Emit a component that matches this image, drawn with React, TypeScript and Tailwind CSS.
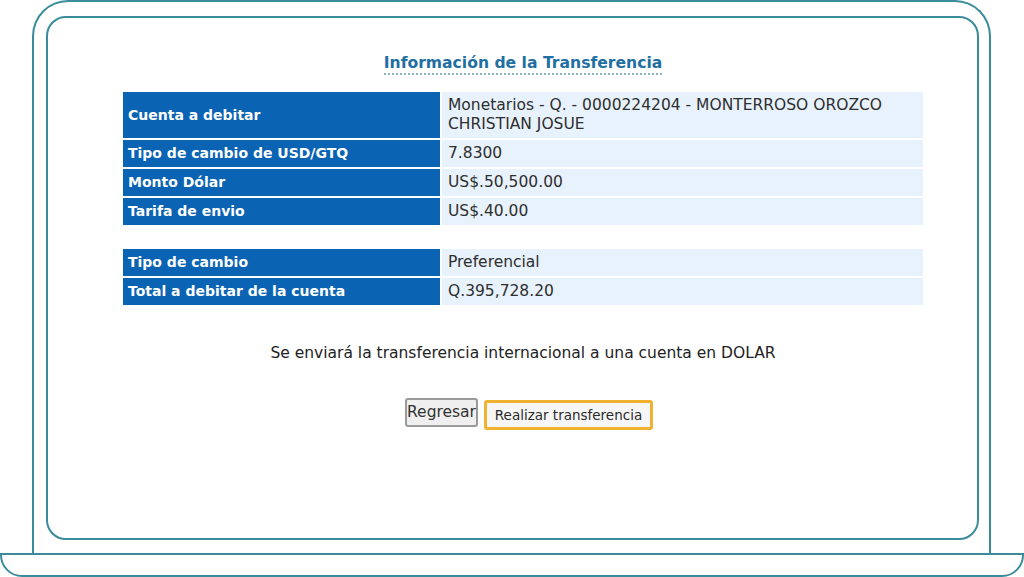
const rowsA = [
  { label: "Cuenta a debitar", value: "Monetarios - Q. - 0000224204 - MONTERROSO OROZCO CHRISTIAN JOSUE", tall: true },
  { label: "Tipo de cambio de USD/GTQ", value: "7.8300" },
  { label: "Monto Dólar", value: "US$.50,500.00" },
  { label: "Tarifa de envio", value: "US$.40.00" },
];

const rowsB = [
  { label: "Tipo de cambio", value: "Preferencial" },
  { label: "Total a debitar de la cuenta", value: "Q.395,728.20" },
];

function InfoTable({ rows }: { rows: { label: string; value: string; tall?: boolean }[] }) {
  return (
    <div className="grid grid-cols-[317px_1fr] gap-[2px]">
      {rows.map((r) => (
        <div key={r.label} className="contents">
          <div
            className={`flex items-center bg-[#0a63b3] pl-[5px] text-[14px] font-bold text-white ${r.tall ? "h-[46px]" : "h-[27px]"}`}
          >
            {r.label}
          </div>
          <div
            className={`flex items-center bg-[#e8f2fc] pl-[6px] pr-[20px] text-[15.5px] leading-[19px] text-[#2e2e2e] ${r.tall ? "h-[46px]" : "h-[27px]"}`}
          >
            {r.value}
          </div>
        </div>
      ))}
    </div>
  );
}

export default function App() {
  return (
    <div className="flex h-[577px] w-[1024px] flex-col overflow-hidden bg-white font-['DejaVu_Sans',sans-serif]">
      {/* laptop lid */}
      <div className="ml-[32px] mr-[33px] h-[553px] rounded-t-[36px] border-2 border-b-0 border-[#3b8c9b] pl-[12px] pr-[10px] pt-[14px]">
        {/* screen */}
        <div className="flex h-[524px] flex-col rounded-[20px] border-2 border-[#3b8c9b] pl-[75px] pr-[54px] pt-[35px]">
          <div className="flex justify-center">
            <span className="border-b-2 border-dotted border-[#8fb2c8] text-[15.6px] font-bold leading-[20px] text-[#1f6fa2]">
              Información de la Transferencia
            </span>
          </div>

          <div className="mt-[17px]">
            <InfoTable rows={rowsA} />
          </div>
          <div className="mt-[24px]">
            <InfoTable rows={rowsB} />
          </div>

          <p className="mt-[39px] text-center text-[15.5px] leading-[18px] text-[#222]">
            Se enviará la transferencia internacional a una cuenta en DOLAR
          </p>

          <div className="mt-[36px] flex items-start justify-center gap-[6px] pl-[12px]">
            <button className="h-[29px] w-[73px] rounded-[3px] border-2 border-[#9a9a9a] bg-[#efefef] text-[15.5px] text-[#333]">
              Regresar
            </button>
            <button className="mt-[2px] h-[30px] w-[169px] rounded-[3px] border-[3px] border-[#f1b232] bg-[#f6f6f6] text-[13.5px] text-[#2a2a2a]">
              Realizar transferencia
            </button>
          </div>
        </div>
      </div>
      {/* laptop base */}
      <div className="h-[24px] rounded-b-[22px] border-2 border-[#3b8c9b]" />
    </div>
  );
}
